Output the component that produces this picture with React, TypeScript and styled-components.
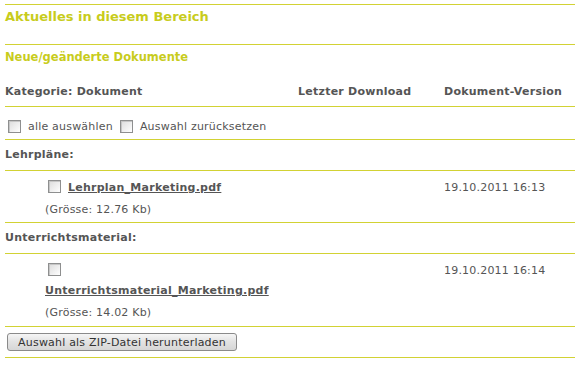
import React from 'react';
import styled, { createGlobalStyle } from 'styled-components';

const GlobalStyle = createGlobalStyle`
	body {
		margin: 0;
		background: #ffffff;
		font-family: 'DejaVu Sans', Verdana, sans-serif;
		font-size: 11px;
		letter-spacing: 0.2px;
		color: #555555;
	}
`;

const LINE = '#d2d234';
const ACCENT = '#c8cc1c';
const COLS = '293px 146px 1fr';

const Page = styled.div`
	width: 570px;
	margin: 4px 5px 0 5px;
`;

const TitleBlock = styled.div`
	border-top: 1px solid ${LINE};
	border-bottom: 1px solid ${LINE};
	height: 41px;
	padding-top: 4px;
	box-sizing: border-box;
`;

const Title = styled.h1`
	margin: 0;
	font-size: 13px;
	line-height: 16px;
	font-weight: bold;
	letter-spacing: 0;
	color: ${ACCENT};
`;

const HeadBlock = styled.div`
	border-bottom: 1px solid ${LINE};
	padding-top: 5px;
	height: 62px;
	box-sizing: border-box;
`;

const SubTitle = styled.h2`
	margin: 0 0 21px 0;
	font-size: 11.5px;
	line-height: 14px;
	font-weight: bold;
	letter-spacing: 0;
	color: ${ACCENT};
`;

const Row = styled.div<{ $height: number; $top?: number }>`
	display: grid;
	grid-template-columns: ${COLS};
	border-bottom: 1px solid ${LINE};
	height: ${({ $height }) => $height}px;
	padding-top: ${({ $top }) => $top ?? 0}px;
	box-sizing: border-box;
`;

const HeadGrid = styled.div`
	display: grid;
	grid-template-columns: ${COLS};
`;

const HeadCell = styled.div`
	font-weight: bold;
	line-height: 14px;
	letter-spacing: 0.25px;
	color: #555555;
`;

const Category = styled.div`
	font-weight: bold;
	line-height: 14px;
	letter-spacing: 0.25px;
	grid-column: 1 / -1;
`;

const Select = styled.label`
	display: flex;
	align-items: center;
	line-height: 14px;
	grid-column: 1 / -1;
`;

const Box = styled.span`
	display: inline-block;
	width: 13px;
	height: 13px;
	box-sizing: border-box;
	border: 1px solid #8e8f8f;
	background: linear-gradient(135deg, #dcdcdc 0%, #f4f4f4 70%, #ffffff 100%);
	box-shadow: inset 1px 1px 0 #c6c6c6;
	vertical-align: -2px;
	flex: none;
`;

const SelectText = styled.span<{ $gap: number }>`
	margin-left: 7px;
	margin-right: ${({ $gap }) => $gap}px;
`;

const DocCell = styled.div`
	padding-left: 40px;
	line-height: 14px;
`;

const DocHead = styled.div`
	display: flex;
	align-items: flex-start;
	flex-wrap: wrap;
`;

const DocBox = styled(Box)`
	margin: 0 7px 0 3px;
`;

const DocLink = styled.a<{ $stacked?: boolean }>`
	font-weight: bold;
	color: #555555;
	text-decoration: underline;
	letter-spacing: 0.25px;
	line-height: 14px;
	margin-top: 1px;
	${({ $stacked }) => ($stacked ? 'flex-basis: 100%; margin-top: 8px;' : '')}
`;

const Size = styled.div`
	margin-top: 8px;
	line-height: 14px;
`;

const DateCell = styled.div`
	line-height: 14px;
	padding-top: 1px;
`;

const ButtonRow = styled.div`
	border-bottom: 1px solid ${LINE};
	height: 31px;
	padding: 6px 0 0 2px;
	box-sizing: border-box;
`;

const Button = styled.button`
	font-family: 'DejaVu Sans', Verdana, sans-serif;
	font-size: 11px;
	letter-spacing: 0.2px;
	color: #333333;
	height: 18px;
	width: 230px;
	padding: 0;
	border: 1px solid #8a8a8a;
	border-radius: 3px;
	background: linear-gradient(#f6f6f6, #e2e2e2 50%, #d6d6d6);
`;

type Doc = { name: string; size: string; date: string; stacked?: boolean };

const groups: { label: string; docs: Doc[]; height: number }[] = [
	{
		label: 'Lehrpläne:',
		height: 52,
		docs: [{ name: 'Lehrplan_Marketing.pdf', size: '12.76', date: '19.10.2011 16:13' }],
	},
	{
		label: 'Unterrichtsmaterial:',
		height: 73,
		docs: [
			{
				name: 'Unterrichtsmaterial_Marketing.pdf',
				size: '14.02',
				date: '19.10.2011 16:14',
				stacked: true,
			},
		],
	},
];

export default function App() {
	return (
		<Page>
			<GlobalStyle />
			<TitleBlock>
				<Title>Aktuelles in diesem Bereich</Title>
			</TitleBlock>
			<HeadBlock>
				<SubTitle>Neue/geänderte Dokumente</SubTitle>
				<HeadGrid>
					<HeadCell>Kategorie: Dokument</HeadCell>
					<HeadCell>Letzter Download</HeadCell>
					<HeadCell>Dokument-Version</HeadCell>
				</HeadGrid>
			</HeadBlock>
			<Row $height={33} $top={7}>
				<Select>
					<Box style={{ marginLeft: 3 }} />
					<SelectText $gap={7}>alle auswählen</SelectText>
					<Box />
					<SelectText $gap={0}>Auswahl zurücksetzen</SelectText>
				</Select>
			</Row>
			{groups.map((g) => (
				<React.Fragment key={g.label}>
					<Row $height={31} $top={8}>
						<Category>{g.label}</Category>
					</Row>
					{g.docs.map((d) => (
						<Row key={d.name} $height={g.height} $top={9}>
							<DocCell>
								<DocHead>
									<DocBox />
									<DocLink href="#" $stacked={d.stacked}>
										{d.name}
									</DocLink>
								</DocHead>
								<Size>(Grösse: {d.size} Kb)</Size>
							</DocCell>
							<div />
							<DateCell>{d.date}</DateCell>
						</Row>
					))}
				</React.Fragment>
			))}
			<ButtonRow>
				<Button>Auswahl als ZIP-Datei herunterladen</Button>
			</ButtonRow>
		</Page>
	);
}
